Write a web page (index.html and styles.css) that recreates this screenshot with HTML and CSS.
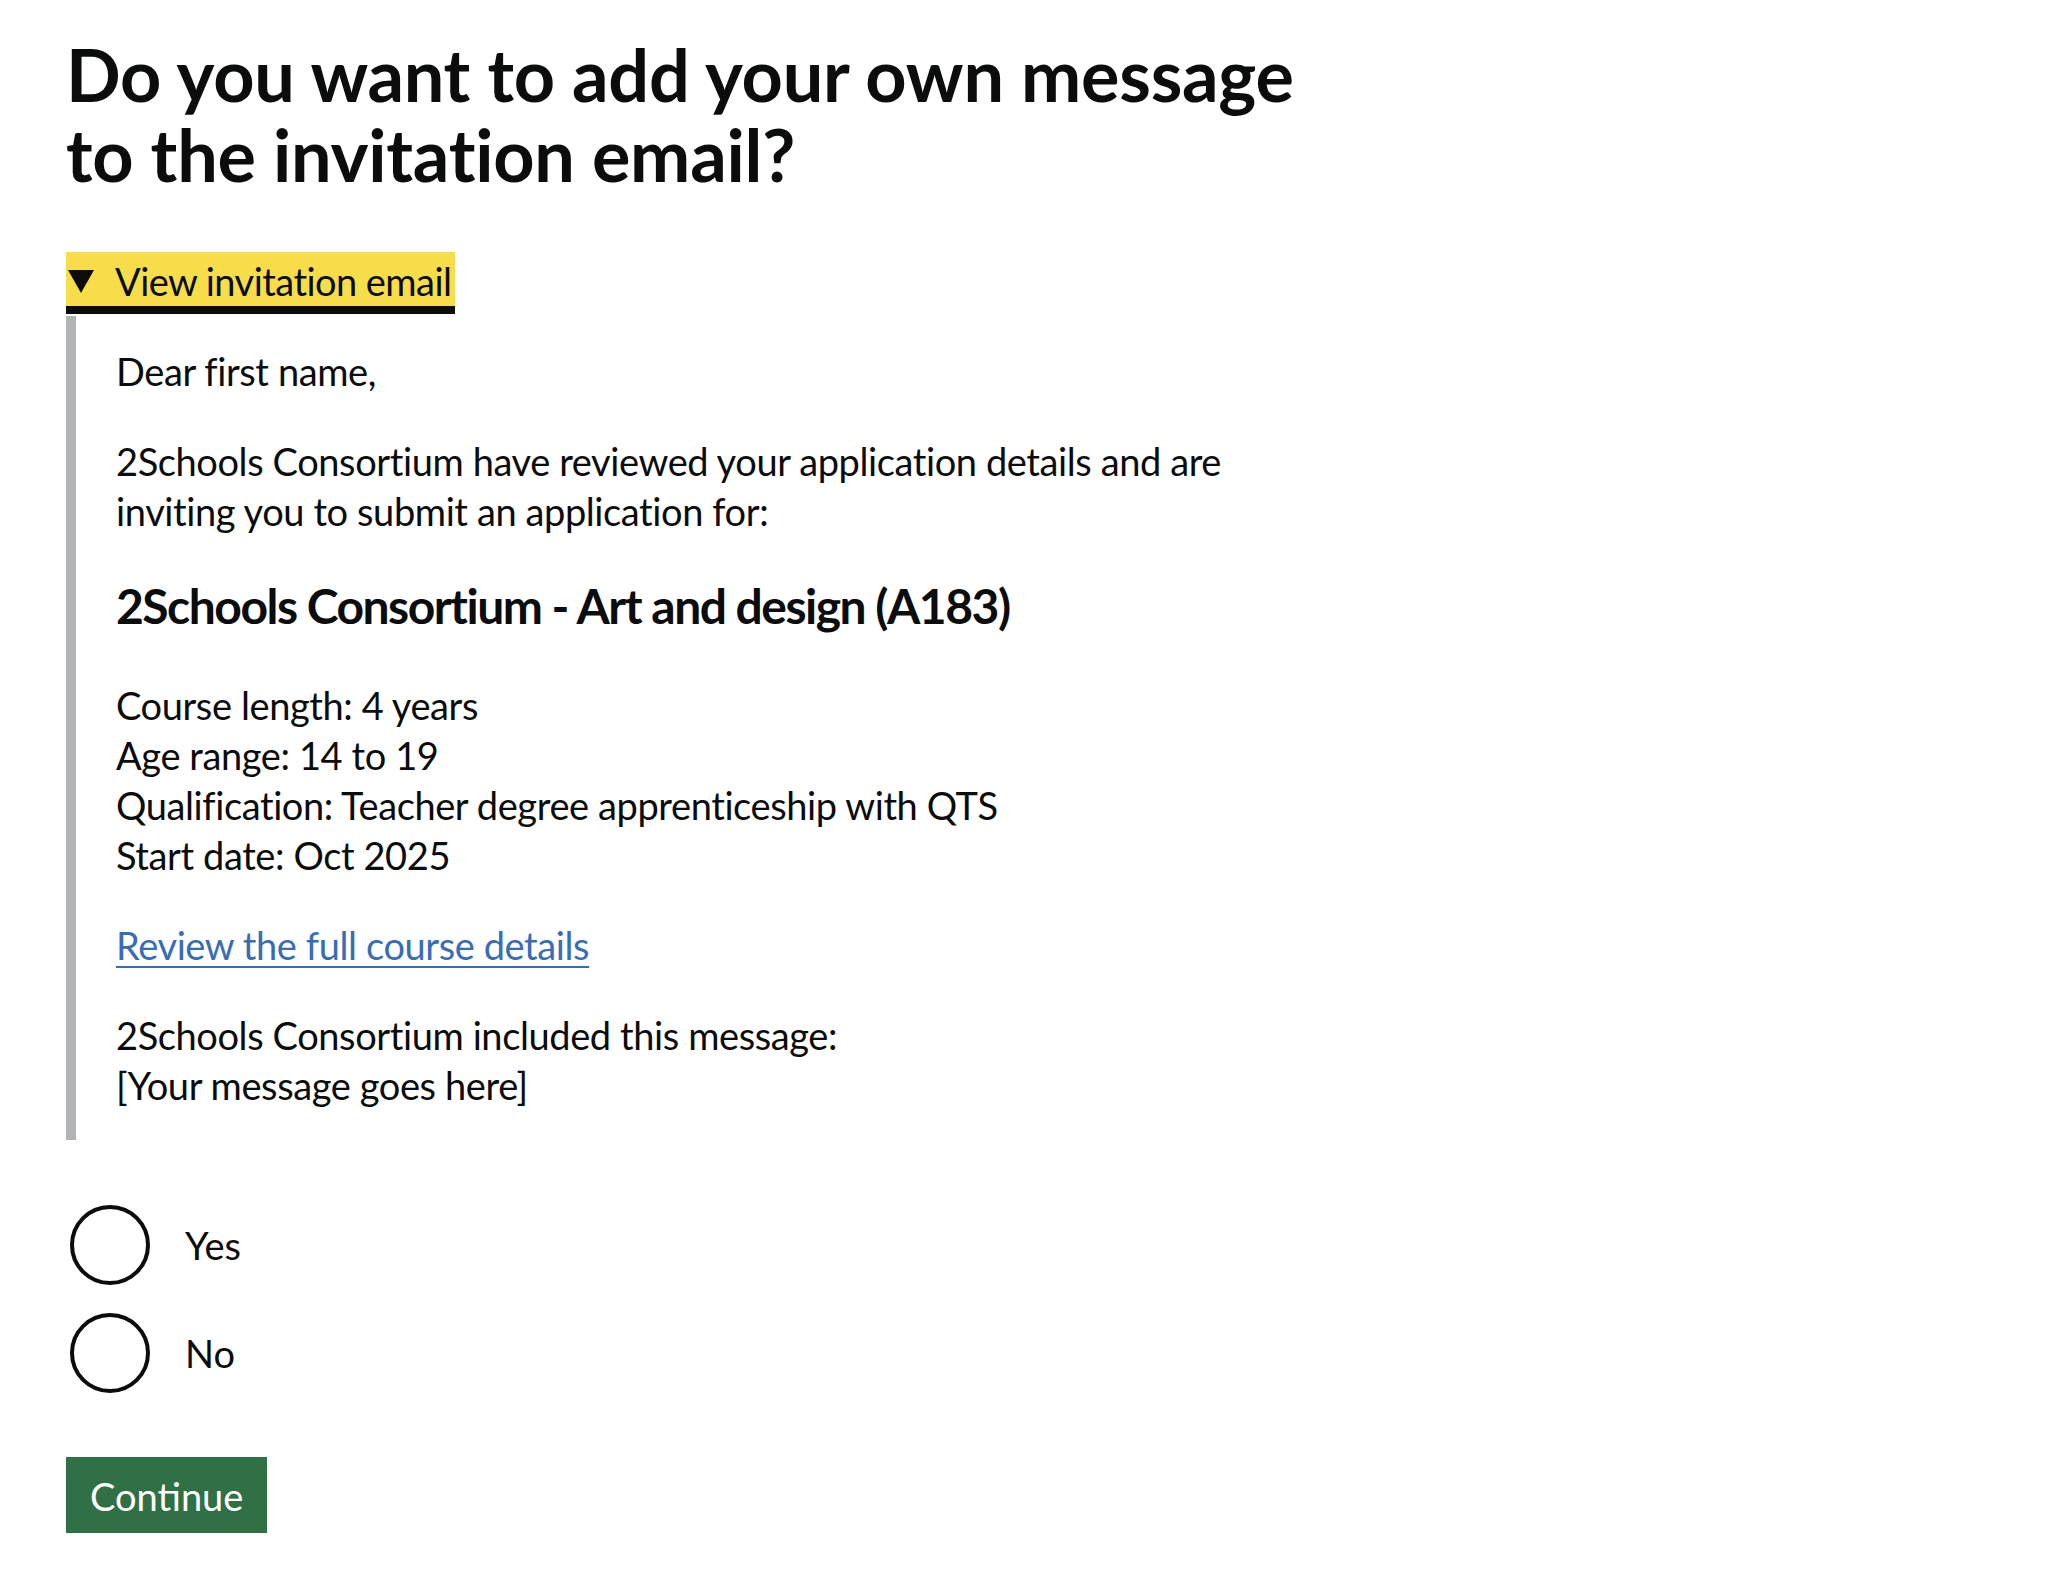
FILE: index.html
```html
<!DOCTYPE html>
<html lang="en">
<head>
<meta charset="utf-8">
<title>Do you want to add your own message to the invitation email?</title>
<link rel="stylesheet" href="styles.css">
</head>
<body>
<main class="page">
  <div class="column">
    <h1 class="title">Do you want to add your own message to the invitation email?</h1>
    <details class="details" open>
      <summary class="details-summary"><span class="marker"></span><span class="summary-text">View invitation email</span></summary>
      <div class="details-text">
        <p class="body">Dear first name,</p>
        <p class="body">2Schools Consortium have reviewed your application details and are inviting you to submit an application for:</p>
        <h2 class="course-title">2Schools Consortium - Art and design (A183)</h2>
        <p class="body">Course length: 4 years<br>Age range: 14 to 19<br>Qualification: Teacher degree apprenticeship with QTS<br>Start date: Oct 2025</p>
        <p class="body"><a class="link" href="#">Review the full course details</a></p>
        <p class="body body-last">2Schools Consortium included this message:<br>[Your message goes here]</p>
      </div>
    </details>
    <form class="form">
      <fieldset class="radios">
        <div class="radio-item">
          <input class="radio-input" type="radio" id="msg-yes" name="message">
          <label class="radio-label" for="msg-yes">Yes</label>
        </div>
        <div class="radio-item">
          <input class="radio-input" type="radio" id="msg-no" name="message">
          <label class="radio-label" for="msg-no">No</label>
        </div>
      </fieldset>
      <button class="button" type="button">Continue</button>
    </form>
  </div>
</main>
</body>
</html>
```
FILE: styles.css
```css
html, body {
  background: #ffffff;
}
body {
  margin: 0;
  font-family: Lato, "Liberation Sans", Arial, sans-serif;
  color: #0b0c0c;
}
.page {
  padding: 34px 0 0 66px;
}
.column {
  width: 1260px;
}
.title {
  font-size: 72px;
  line-height: 80px;
  font-weight: 700;
  letter-spacing: -0.25px;
  margin: 0 0 62px;
}
.details {
  margin: 0 0 61px;
}
.details-summary {
  display: flex;
  align-items: center;
  width: fit-content;
  height: 50px;
  padding-right: 4px;
  margin-bottom: 10px;
  background: #f8dd4b;
  box-shadow: 0 -4px 0 #f8dd4b, 0 8px 0 #0b0c0c;
  list-style: none;
  cursor: pointer;
  font-size: 38px;
  line-height: 50px;
  letter-spacing: -0.55px;
}
.details-summary::-webkit-details-marker {
  display: none;
}
.marker {
  width: 0;
  height: 0;
  border-style: solid;
  border-width: 23px 13px 0 13px;
  border-color: #0b0c0c transparent transparent transparent;
  margin: 0 21px 0 2px;
}
.details-text {
  border-left: 10px solid #b1b4b6;
  padding: 30px 30px 30px 40px;
}
.body {
  font-size: 38px;
  line-height: 50px;
  letter-spacing: -0.4px;
  margin: 0 0 40px;
}
.body-last {
  margin-bottom: 0;
}
.course-title {
  font-size: 48px;
  line-height: 60px;
  font-weight: 700;
  letter-spacing: -1.5px;
  margin: 5px 0 44px;
}
.link {
  color: #386db5;
  text-decoration: underline;
  text-decoration-thickness: 2px;
  text-underline-offset: 6px;
}
.form {
  margin: 0;
}
.radios {
  border: 0;
  margin: 0 0 60px;
  padding: 0;
  min-width: 0;
}
.radio-item {
  display: flex;
  align-items: center;
  min-height: 88px;
  margin-bottom: 20px;
}
.radio-item:last-child {
  margin-bottom: 0;
}
.radio-input {
  appearance: none;
  -webkit-appearance: none;
  box-sizing: border-box;
  flex-shrink: 0;
  width: 80px;
  height: 80px;
  margin: 0 0 0 4px;
  border: 4px solid #0b0c0c;
  border-radius: 50%;
  background: #ffffff;
}
.radio-label {
  font-size: 38px;
  line-height: 50px;
  margin-left: 35px;
}
.button {
  font-family: inherit;
  font-size: 38px;
  line-height: 1;
  padding: 16px 20px 14px;
  margin: 0;
  border: 4px solid transparent;
  border-radius: 0;
  background: #307045;
  color: #ffffff;
  box-shadow: 0 4px 0 #0f2d1b;
  cursor: pointer;
}
```
